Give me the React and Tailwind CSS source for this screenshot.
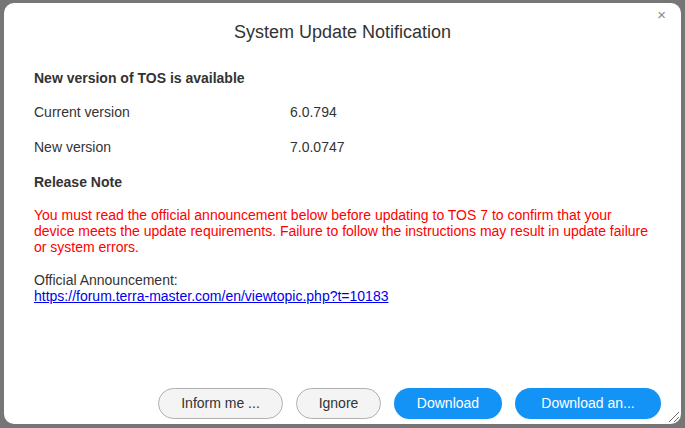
// 시스템 업데이트 알림 대화상자

const rows = [
    { label: "Current version", value: "6.0.794" },
    { label: "New version", value: "7.0.0747" },
];

function ResizeGrip() {
    return (
        <svg width="14" height="14" viewBox="0 0 14 14" className="absolute right-[1px] bottom-[1px]">
            <path d="M13 3 L3 13 M13 8 L8 13" stroke="#6b6b6b" strokeWidth="1" fill="none" />
        </svg>
    );
}

export default function App() {
    return (
        <div className="w-[685px] h-[428px] bg-[#767676] overflow-hidden pl-[4px] pt-[3px]" style={{ fontFamily: '"Liberation Sans", Arial, sans-serif' }}>
            <div className="relative w-[677px] h-[421px] bg-white rounded-[10px] flex flex-col text-[#333]">
                <button className="absolute right-[15px] top-[4px] text-[#888] text-[15px] leading-none font-light">×</button>

                <h2 className="mt-[18px] text-center text-[18px] leading-[22px] text-[#333]">System Update Notification</h2>

                <div className="pl-[30px] pr-[20px] text-[14px]">
                    <p className="mt-[25px] leading-[20px] font-bold text-[#333]">New version of TOS is available</p>

                    {rows.map((row) => (
                        <div key={row.label} className="flex mt-[14px] leading-[21px]">
                            <span className="w-[256px]">{row.label}</span>
                            <span>{row.value}</span>
                        </div>
                    ))}

                    <p className="mt-[14px] leading-[20px] font-bold">Release Note</p>

                    <p className="mt-[15px] leading-[16px] text-[#ff0000] whitespace-nowrap">
                        You must read the official announcement below before updating to TOS 7 to confirm that your<br />
                        device meets the update requirements. Failure to follow the instructions may result in update failure<br />
                        or system errors.
                    </p>

                    <p className="mt-[17px] leading-[16px]">Official Announcement:</p>
                    <a href="#" className="block leading-[16px] text-[#0000ee] underline">
                        https://forum.terra-master.com/en/viewtopic.php?t=10183
                    </a>
                </div>

                <div className="flex-1" />

                <div className="flex justify-end gap-[13px] pr-[20px] pb-[5px] text-[14px]">
                    <button className="w-[125px] h-[31px] rounded-full border border-[#b0b0b0] bg-[#f4f4f4] text-[#333]">Inform me ...</button>
                    <button className="w-[85px] h-[31px] rounded-full border border-[#b0b0b0] bg-[#f4f4f4] text-[#333]">Ignore</button>
                    <button className="w-[108px] h-[31px] rounded-full bg-[#1493f6] text-white">Download</button>
                    <button className="w-[146px] h-[31px] rounded-full bg-[#1493f6] text-white">Download an...</button>
                </div>

                <ResizeGrip />
            </div>
        </div>
    );
}
